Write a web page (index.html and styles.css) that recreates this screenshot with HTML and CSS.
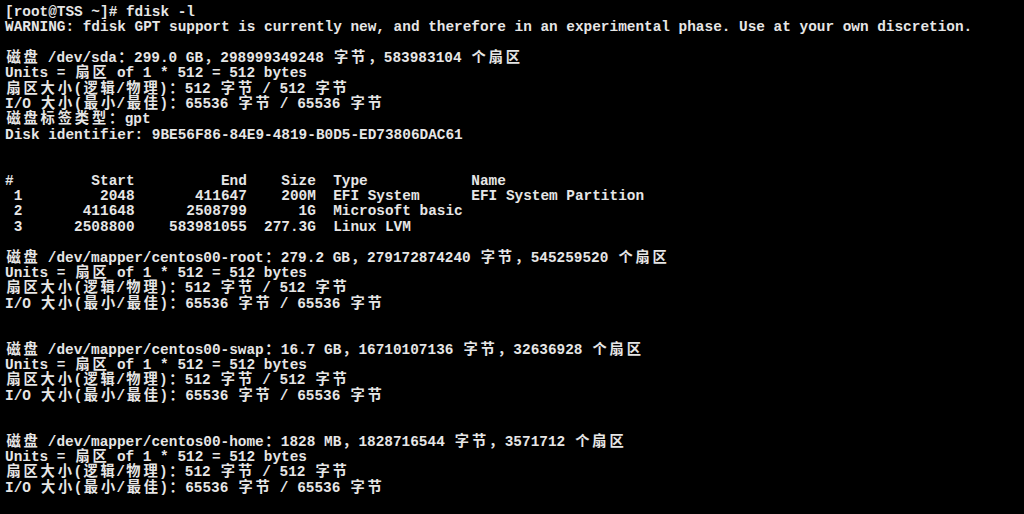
FILE: index.html
```html
<!DOCTYPE html>
<html lang="zh">
<head>
<meta charset="utf-8">
<title>fdisk -l</title>
<link rel="stylesheet" href="styles.css">
</head>
<body>
<pre class="term">
[root@TSS ~]# fdisk -l
WARNING: fdisk GPT support is currently new, and therefore in an experimental phase. Use at your own discretion.

<span class="w">磁盘</span> /dev/sda<span class="w">：</span>299.0 GB<span class="w">，</span>298999349248 <span class="w">字节，</span>583983104 <span class="w">个扇区</span>
Units = <span class="w">扇区</span> of 1 * 512 = 512 bytes
<span class="w">扇区大小</span>(<span class="w">逻辑</span>/<span class="w">物理</span>)<span class="w">：</span>512 <span class="w">字节</span> / 512 <span class="w">字节</span>
I/O <span class="w">大小</span>(<span class="w">最小</span>/<span class="w">最佳</span>)<span class="w">：</span>65536 <span class="w">字节</span> / 65536 <span class="w">字节</span>
<span class="w">磁盘标签类型：</span>gpt
Disk identifier: 9BE56F86-84E9-4819-B0D5-ED73806DAC61


#         Start          End    Size  Type            Name
 1         2048       411647    200M  EFI System      EFI System Partition
 2       411648      2508799      1G  Microsoft basic
 3      2508800    583981055  277.3G  Linux LVM

<span class="w">磁盘</span> /dev/mapper/centos00-root<span class="w">：</span>279.2 GB<span class="w">，</span>279172874240 <span class="w">字节，</span>545259520 <span class="w">个扇区</span>
Units = <span class="w">扇区</span> of 1 * 512 = 512 bytes
<span class="w">扇区大小</span>(<span class="w">逻辑</span>/<span class="w">物理</span>)<span class="w">：</span>512 <span class="w">字节</span> / 512 <span class="w">字节</span>
I/O <span class="w">大小</span>(<span class="w">最小</span>/<span class="w">最佳</span>)<span class="w">：</span>65536 <span class="w">字节</span> / 65536 <span class="w">字节</span>


<span class="w">磁盘</span> /dev/mapper/centos00-swap<span class="w">：</span>16.7 GB<span class="w">，</span>16710107136 <span class="w">字节，</span>32636928 <span class="w">个扇区</span>
Units = <span class="w">扇区</span> of 1 * 512 = 512 bytes
<span class="w">扇区大小</span>(<span class="w">逻辑</span>/<span class="w">物理</span>)<span class="w">：</span>512 <span class="w">字节</span> / 512 <span class="w">字节</span>
I/O <span class="w">大小</span>(<span class="w">最小</span>/<span class="w">最佳</span>)<span class="w">：</span>65536 <span class="w">字节</span> / 65536 <span class="w">字节</span>


<span class="w">磁盘</span> /dev/mapper/centos00-home<span class="w">：</span>1828 MB<span class="w">，</span>1828716544 <span class="w">字节，</span>3571712 <span class="w">个扇区</span>
Units = <span class="w">扇区</span> of 1 * 512 = 512 bytes
<span class="w">扇区大小</span>(<span class="w">逻辑</span>/<span class="w">物理</span>)<span class="w">：</span>512 <span class="w">字节</span> / 512 <span class="w">字节</span>
I/O <span class="w">大小</span>(<span class="w">最小</span>/<span class="w">最佳</span>)<span class="w">：</span>65536 <span class="w">字节</span> / 65536 <span class="w">字节</span>
</pre>
</body>
</html>
```

FILE: styles.css
```css
html, body {
  margin: 0;
  padding: 0;
  background: #000;
}

.term {
  margin: 0;
  padding: 5px 0 0 5px;
  font-family: "Courier New", "Nimbus Mono PS", "Nimbus Mono L", "FreeMono", "Liberation Mono", "Noto Sans CJK SC", monospace;
  font-weight: bold;
  font-size: 14.4px;
  line-height: 15.35px;
  color: #e6e6e6;
  white-space: pre;
}

.w {
  font-family: "Noto Sans CJK SC", sans-serif;
  font-weight: bold;
  font-size: 14.25px;
  line-height: 0;
  padding-left: 0.1em;
  letter-spacing: 0.2em;
  margin-right: -0.1em;
}
```
